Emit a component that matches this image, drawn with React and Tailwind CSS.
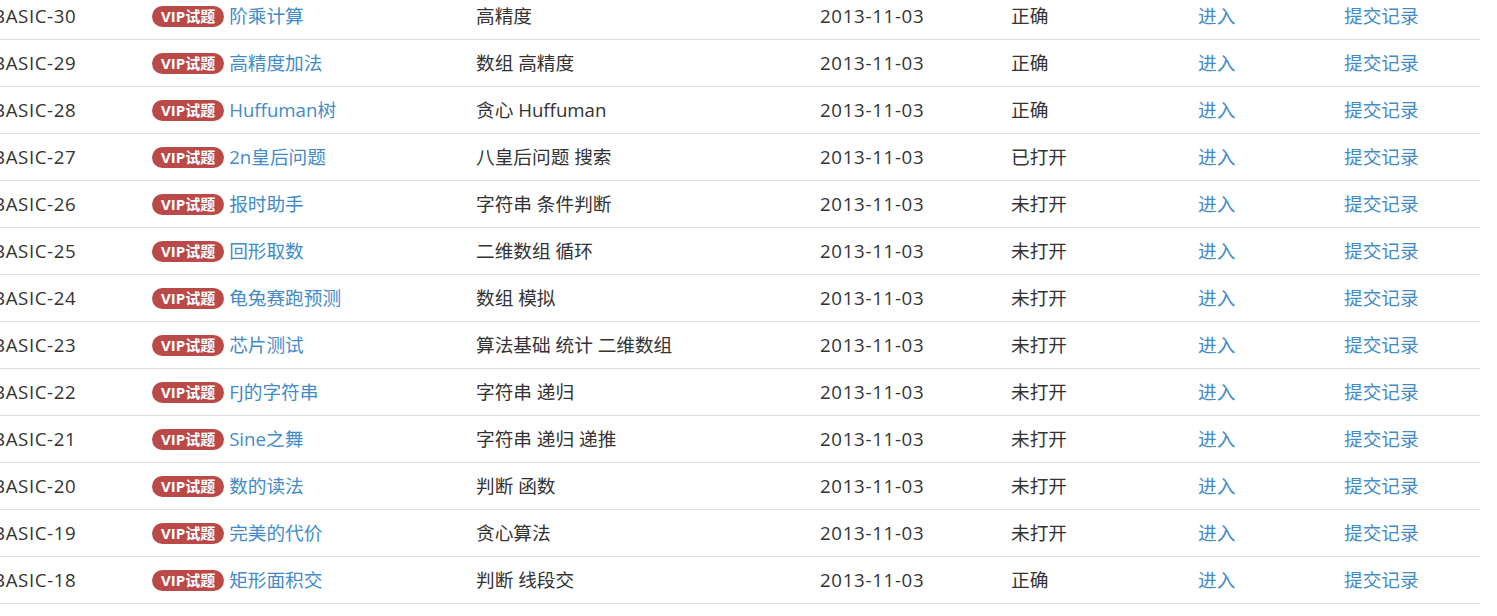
const rows = [
  ["BASIC-30", "阶乘计算", "高精度", "正确"],
  ["BASIC-29", "高精度加法", "数组 高精度", "正确"],
  ["BASIC-28", "Huffuman树", "贪心 Huffuman", "正确"],
  ["BASIC-27", "2n皇后问题", "八皇后问题 搜索", "已打开"],
  ["BASIC-26", "报时助手", "字符串 条件判断", "未打开"],
  ["BASIC-25", "回形取数", "二维数组 循环", "未打开"],
  ["BASIC-24", "龟兔赛跑预测", "数组 模拟", "未打开"],
  ["BASIC-23", "芯片测试", "算法基础 统计 二维数组", "未打开"],
  ["BASIC-22", "FJ的字符串", "字符串 递归", "未打开"],
  ["BASIC-21", "Sine之舞", "字符串 递归 递推", "未打开"],
  ["BASIC-20", "数的读法", "判断 函数", "未打开"],
  ["BASIC-19", "完美的代价", "贪心算法", "未打开"],
  ["BASIC-18", "矩形面积交", "判断 线段交", "正确"],
];

const App = () => {
  return (
    <div
      className="w-[1497px] h-[616px] overflow-hidden bg-white text-[18.67px] text-[#333]"
      style={{ fontFamily: '"Open Sans", "Noto Sans CJK SC", sans-serif' }}
    >
      <div className="w-[1495px] ml-[-15px] mt-[-7px]">
        {rows.map(([id, title, tags, status]) => (
          <div
            key={id}
            className="grid grid-cols-[159px_324px_344px_191px_187px_146px_144px] h-[47px] items-center border-b border-[#ddd]"
          >
            <div className="px-2 tracking-[0.6px]">{id}</div>
            <div className="px-2 flex items-center gap-[5px]">
              <span className="inline-flex items-center h-[21px] px-[9px] rounded-full bg-[#b94a48] text-white text-[15px] font-bold leading-none">
                VIP试题
              </span>
              <a href="#" className="text-[#428bca]">
                {title}
              </a>
            </div>
            <div className="px-2">{tags}</div>
            <div className="px-2 tracking-[0.7px]">2013-11-03</div>
            <div className="px-2">{status}</div>
            <div className="px-2">
              <a href="#" className="text-[#428bca]">
                进入
              </a>
            </div>
            <div className="px-2">
              <a href="#" className="text-[#428bca]">
                提交记录
              </a>
            </div>
          </div>
        ))}
      </div>
    </div>
  );
};

export default App;
